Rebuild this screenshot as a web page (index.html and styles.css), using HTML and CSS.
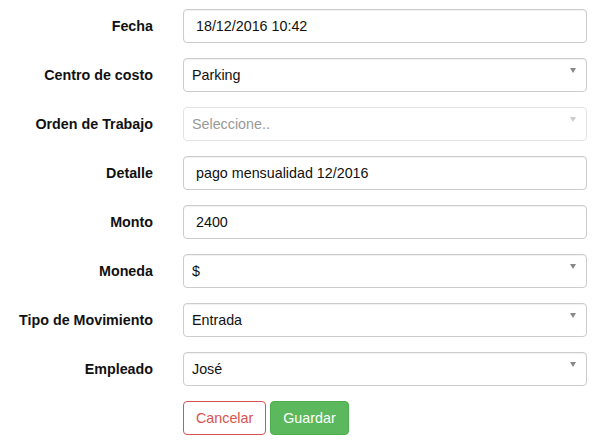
FILE: index.html
```html
<!DOCTYPE html>
<html lang="es">
<head>
<meta charset="utf-8">
<title>Movimiento</title>
<link rel="stylesheet" href="styles.css">
</head>
<body>
<form class="form">
  <div class="row">
    <label class="label">Fecha</label>
    <input class="control" type="text" value="18/12/2016 10:42">
  </div>
  <div class="row">
    <label class="label">Centro de costo</label>
    <span class="select-wrap"><select class="control select"><option>Parking</option></select></span>
  </div>
  <div class="row">
    <label class="label">Orden de Trabajo</label>
    <span class="select-wrap is-muted"><select class="control select placeholder"><option>Seleccione..</option></select></span>
  </div>
  <div class="row">
    <label class="label">Detalle</label>
    <input class="control" type="text" value="pago mensualidad 12/2016">
  </div>
  <div class="row">
    <label class="label">Monto</label>
    <input class="control" type="text" value="2400">
  </div>
  <div class="row">
    <label class="label">Moneda</label>
    <span class="select-wrap"><select class="control select"><option>$</option></select></span>
  </div>
  <div class="row">
    <label class="label">Tipo de Movimiento</label>
    <span class="select-wrap"><select class="control select"><option>Entrada</option></select></span>
  </div>
  <div class="row">
    <label class="label">Empleado</label>
    <span class="select-wrap"><select class="control select"><option>José</option></select></span>
  </div>
  <div class="row">
    <span></span>
    <div class="actions">
      <button type="button" class="btn btn-cancel">Cancelar</button>
      <button type="button" class="btn btn-save">Guardar</button>
    </div>
  </div>
</form>
</body>
</html>
```
FILE: styles.css
```css
* { box-sizing: border-box; }
html, body {
  margin: 0;
  padding: 0;
  background: #fff;
  font-family: "Liberation Sans", Arial, sans-serif;
  font-size: 14.3px;
  color: #111;
}
.form {
  display: flex;
  flex-direction: column;
  gap: 15px;
  padding-top: 9px;
}
.row {
  display: grid;
  grid-template-columns: 153px 404px;
  column-gap: 30px;
  align-items: start;
}
.label {
  text-align: right;
  font-weight: bold;
  line-height: 20px;
  padding-top: 7px;
  color: #111;
}
.control {
  display: block;
  width: 100%;
  height: 34px;
  margin: 0;
  padding: 6px 12px;
  font-family: inherit;
  font-size: 14.3px;
  line-height: 20px;
  color: #111;
  background: #fff;
  border: 1px solid #ccc;
  border-radius: 4px;
  box-shadow: inset 0 1px 1px rgba(0,0,0,0.06);
  outline: none;
}
.select-wrap {
  position: relative;
  display: block;
}
.select {
  -webkit-appearance: none;
  appearance: none;
  padding-left: 8px;
}
.select-wrap::after {
  content: "";
  position: absolute;
  right: 11px;
  top: 10px;
  border-left: 3px solid transparent;
  border-right: 3px solid transparent;
  border-top: 5px solid #888;
}
.is-muted .select {
  border-color: #e3e3e3;
  box-shadow: none;
}
.is-muted::after {
  border-top-color: #ccc;
}
.placeholder {
  color: #999;
}
.actions {
  display: flex;
  gap: 4px;
}
.btn {
  height: 34px;
  padding: 6px 12px;
  font-family: inherit;
  font-size: 14.3px;
  line-height: 20px;
  border-radius: 4px;
  border: 1px solid;
  cursor: pointer;
}
.btn-cancel {
  background: #fff;
  color: #d9534f;
  border-color: #d9534f;
}
.btn-save {
  background: #5cb85c;
  color: #fff;
  border-color: #4cae4c;
}
```
